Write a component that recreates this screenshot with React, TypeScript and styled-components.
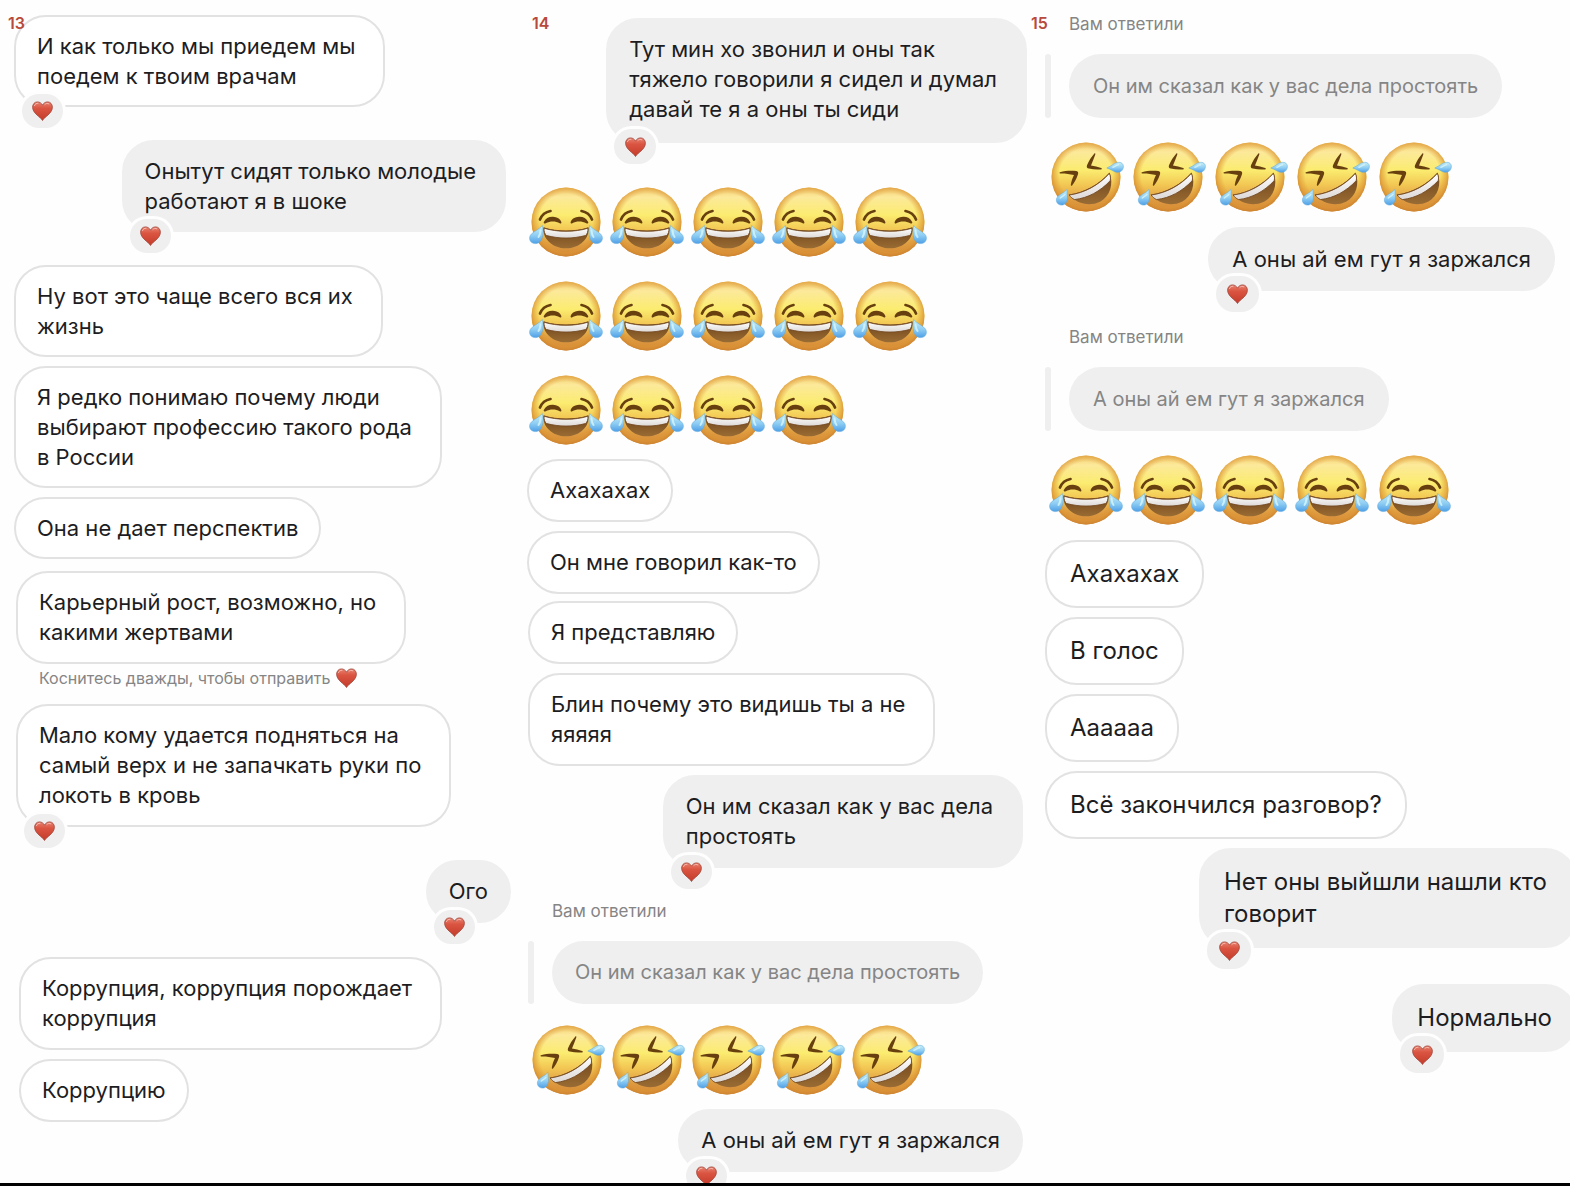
import React from "react";
import styled, { createGlobalStyle, css } from "styled-components";

/* ---------- tokens ---------- */

const GREY = "#efefef";
const LINE = "#e2e2e2";
const INK = "#1d1d1f";
const MUTED = "#858585";

type Density = "compact" | "regular" | "roomy" | "wide" | "large";

interface Metrics {
  font: number;
  line: number;
  top: number;
  bottom: number;
  side: number;
  badgeW: number;
  badgeH: number;
  lift: number;
  reply: number;
  emoji: string;
}

const SMALL: Metrics = {
  font: 22,
  line: 30,
  top: 16,
  bottom: 16,
  side: 23,
  badgeW: 41,
  badgeH: 34,
  lift: 24,
  reply: 0,
  emoji: "12px 0 5px 2px",
};

const METRICS: Record<Density, Metrics> = {
  compact: SMALL,
  regular: { ...SMALL, bottom: 17 },
  roomy: { ...SMALL, bottom: 19, badgeW: 42, badgeH: 35 },
  wide: { ...SMALL, top: 17, bottom: 17, side: 24, badgeW: 43, badgeH: 36, reply: 3, emoji: "15px 0 6px 4px" },
  large: { ...SMALL, font: 24, line: 32, top: 18, bottom: 18, side: 25, badgeW: 44, badgeH: 37, lift: 27 },
};

/* ---------- layout ---------- */

const GlobalStyle = createGlobalStyle`
  *, *::before, *::after { box-sizing: border-box; }
  body {
    margin: 0;
    background: #fefefe;
    color: ${INK};
    font-family: Inter, "Noto Sans", Roboto, sans-serif;
  }
`;

const Page = styled.main`
  display: flex;
  flex-direction: column;
  min-height: 100vh;
  border-bottom: 3px solid #000;
`;

const Board = styled.div`
  display: grid;
  grid-template-columns: 518fr 517fr 535fr;
  flex: 1;
  overflow: hidden;
`;

const Column = styled.section`
  position: relative;
  min-width: 0;
`;

const PageNumber = styled.h2<{ $left: number }>`
  position: absolute;
  z-index: 2;
  top: 13px;
  left: ${(p) => p.$left}px;
  margin: 0;
  color: #b84a3c;
  font: 600 16px/20px Inter, sans-serif;
`;

const Fragment = styled.ol<{ $density: Density; $before: number; $left: number; $right: number }>`
  display: flex;
  flex-direction: column;
  gap: 9px;
  margin: 0 ${(p) => p.$right}px 0 ${(p) => p.$left}px;
  padding: ${(p) => p.$before}px 0 0;
  list-style: none;
  ${({ $density }) => {
    const m = METRICS[$density];
    return css`
      --font: ${m.font}px;
      --line: ${m.line}px;
      --top: ${m.top}px;
      --bottom: ${m.bottom}px;
      --side: ${m.side}px;
      --badge-w: ${m.badgeW}px;
      --badge-h: ${m.badgeH}px;
      --lift: ${m.lift}px;
      --reply: ${m.reply}px;
      --emoji: ${m.emoji};
    `;
  }}
`;

const Row = styled.li<{ $own?: boolean; $reacted?: boolean }>`
  display: flex;
  flex-direction: column;
  align-items: ${(p) => (p.$own ? "flex-end" : "flex-start")};
  padding-bottom: ${(p) => (p.$reacted ? "var(--lift)" : "0")};

  &:last-child {
    padding-bottom: 0;
  }
`;

const Bubble = styled.div<{ $own?: boolean; $multi?: boolean }>`
  position: relative;
  padding: calc(var(--top) - 2px) ${(p) => (p.$multi ? "28px" : "calc(var(--side) - 2px)")}
    calc(var(--bottom) - 2px) calc(var(--side) - 2px);
  border: 2px solid ${(p) => (p.$own ? GREY : LINE)};
  border-radius: 32px;
  background: ${(p) => (p.$own ? GREY : "#fff")};
  font-size: var(--font);
  line-height: var(--line);
  white-space: pre;
`;

const Reaction = styled.span`
  position: absolute;
  bottom: -23px;
  left: 6px;
  display: flex;
  align-items: center;
  justify-content: center;
  width: var(--badge-w);
  height: var(--badge-h);
  border-radius: 18px;
  background: ${GREY};
  box-shadow: 0 0 0 3px #fefefe;
`;

const Hint = styled.p`
  display: flex;
  align-items: center;
  gap: 6px;
  margin: 0;
  padding: 4px 0 7px 23px;
  color: ${MUTED};
  font-size: 16px;
  line-height: 20px;
`;

const Reply = styled.li`
  display: flex;
  flex-direction: column;
  gap: 20px;
  padding-top: var(--reply);
`;

const ReplyLabel = styled.span`
  padding-left: 24px;
  color: ${MUTED};
  font-size: 17px;
  line-height: 20px;
`;

const QuoteLine = styled.div`
  display: flex;
  gap: 18px;
`;

const QuoteBar = styled.span`
  width: 6px;
  border-radius: 3px;
  background: ${GREY};
`;

const Quote = styled.blockquote`
  margin: 0;
  padding: var(--top) var(--side) var(--bottom);
  border-radius: 32px;
  background: ${GREY};
  color: ${MUTED};
  font-size: 20px;
  line-height: var(--line);
  white-space: nowrap;
`;

const EmojiBlock = styled.li`
  display: flex;
  flex-direction: column;
  gap: 24px;
  padding: var(--emoji);
`;

const EmojiLine = styled.div<{ $gap: number }>`
  display: flex;
  gap: ${(p) => p.$gap}px;
`;

const EmojiSvg = styled.svg`
  display: block;
  flex: none;
  width: 74px;
  height: 70px;
  overflow: visible;
`;

const Defs = styled.svg`
  position: absolute;
  width: 0;
  height: 0;
`;

/* ---------- drawings ---------- */

const SharedGradients = () => (
  <Defs aria-hidden="true">
    <defs>
      <linearGradient id="face" x1="0" y1="0" x2="0" y2="1">
        <stop offset="0" stopColor="#f3cf72" />
        <stop offset=".14" stopColor="#fce99a" />
        <stop offset=".4" stopColor="#fbec70" />
        <stop offset=".62" stopColor="#f2c653" />
        <stop offset=".85" stopColor="#dd9a42" />
        <stop offset="1" stopColor="#d08437" />
      </linearGradient>
      <radialGradient id="rim" cx=".5" cy=".48" r=".52">
        <stop offset=".74" stopColor="#dd9433" stopOpacity="0" />
        <stop offset=".9" stopColor="#dd9433" stopOpacity=".6" />
        <stop offset="1" stopColor="#cd8430" stopOpacity=".95" />
      </radialGradient>
      <linearGradient id="mouth" x1="0" y1="0" x2="0" y2="1">
        <stop offset="0" stopColor="#6d4318" />
        <stop offset="1" stopColor="#9a6c34" />
      </linearGradient>
      <linearGradient id="teeth" x1="0" y1="0" x2="0" y2="1">
        <stop offset="0" stopColor="#ffffff" />
        <stop offset="1" stopColor="#dcd8d6" />
      </linearGradient>
      <linearGradient id="tear" x1="0" y1="0" x2="0" y2="1">
        <stop offset="0" stopColor="#c9f0f6" />
        <stop offset=".55" stopColor="#8ecdf3" />
        <stop offset="1" stopColor="#4e9fe6" />
      </linearGradient>
      <linearGradient id="heart" x1="0" y1="0" x2="0" y2="1">
        <stop offset="0" stopColor="#e8806f" />
        <stop offset=".35" stopColor="#da5541" />
        <stop offset="1" stopColor="#c43a2a" />
      </linearGradient>
    </defs>
  </Defs>
);

const Heart = () => (
  <svg width="21" height="20" viewBox="0 0 21 20" role="img" aria-label="Сердце">
    <path
      d="M10.5 19.5C9 16.300.6 12.500.6 6.200.6 3.100 2.700.9 5.400.9c2.300 0 4.200 1.300 5.100 3.300C11.400 2.200 13.300.9 15.600.9c2.700 0 4.800 2.200 4.800 5.300 0 6.300-8.400 10.100-9.900 13.300z"
      fill="url(#heart)"
      stroke="#a0483c"
      strokeWidth=".8"
    />
    <path
      d="M2.500 4.600C3.100 2.900 4.500 2.100 6 2.300M12.900 3.400c1-1.100 2.600-1.300 3.900-.6"
      fill="none"
      stroke="#f7b9ae"
      strokeWidth="1"
      strokeLinecap="round"
    />
  </svg>
);

const Joy = () => (
  <EmojiSvg viewBox="0 0 74 70" role="img" aria-label="Смех до слёз">
    <circle cx="37" cy="35" r="34.500" fill="url(#face)" />
    <circle cx="37" cy="35" r="34.500" fill="url(#rim)" />
    <g fill="none" stroke="#684010" strokeLinecap="round" strokeWidth="2.700">
      <path d="M11 32.500C12.800 28 16.500 24.900 21.500 24" />
      <path d="M52.500 24C57.500 24.900 61.200 28 63 32.500" />
    </g>
    <g fill="#684010">
      <path d="M14.800 35C16.500 31.300 20 29.600 24 29.800c4 .1 7.400 2.200 8.400 5.400.2 1.200-.8 1.600-1.700 1.100-3.900-2.400-9.600-2.500-14 0-1.200.6-2.400-.1-1.900-1.300z" />
      <path d="M59.200 35C57.500 31.300 54 29.600 50 29.800c-4 .1-7.400 2.200-8.400 5.400-.2 1.200.8 1.600 1.700 1.100 3.900-2.400 9.600-2.500 14 0 1.200.6 2.400-.1 1.900-1.300z" />
    </g>
    <path d="M14.500 40.200C28 44.600 46 44.600 59.500 40.200 61 51 51 61.300 37 61.300S13 51 14.500 40.200z" fill="url(#mouth)" />
    <path
      d="M15 41.200C28 45.300 46 45.300 59 41.200c.1 3.300-.6 5.700-2.400 7.300C44 51.900 30 51.900 17.400 48.500 15.600 46.900 14.900 44.500 15 41.200z"
      fill="url(#teeth)"
      stroke="#744820"
      strokeWidth=".9"
    />
    <g fill="url(#tear)" stroke="#5aa6de" strokeWidth=".5">
      <path d="M13.400 38.500C14.800 45.500 14.500 56.200 6.600 56.600.8 56.800-1.400 50.600 2.600 46.800 5.800 43.900 10 42.300 13.400 38.500z" />
      <path d="M60.600 38.500C59.200 45.500 59.500 56.200 67.400 56.600c5.800.2 8-6 4-9.800C68.200 43.900 64 42.300 60.600 38.500z" />
    </g>
    <g fill="none" stroke="#d9f6fa" strokeWidth="2" strokeLinecap="round" opacity=".8">
      <path d="M11.500 43.500C11.300 46 10.600 48.500 9.500 50" />
      <path d="M62.500 43.500C62.700 46 63.400 48.500 64.500 50" />
    </g>
  </EmojiSvg>
);

const Rofl = () => (
  <EmojiSvg viewBox="0 0 74 70" role="img" aria-label="Катаюсь по полу от смеха">
    <circle cx="37" cy="35" r="34.500" fill="url(#face)" />
    <circle cx="37" cy="35" r="34.500" fill="url(#rim)" />
    <g fill="#684010">
      <path d="M11 30.200C16 28.700 22 28.400 27.300 29 29.300 29.300 29.500 30.800 28.900 32.600 27.600 36.500 25.800 40.300 22.900 43.700 22.200 44 21.700 43.600 21.800 42.800 22.500 39.200 23.500 36 25 33.100 20.500 31.800 16 31.300 11.200 31.400 10.300 31.300 10.200 30.500 11 30.200z" />
      <path d="M45.400 11.400C42.400 14.800 39.600 19 38 23.300 37.400 25.200 38 26.300 39.800 26.600 44 27.500 48 27.900 52.300 27.400 53 27 53 26.300 52.200 26 48.800 24.800 45.500 23.900 42 23.500 43.300 20 44.900 16.400 46.300 12.400 46.500 11.500 46 11 45.400 11.400z" />
    </g>
    <path d="M19.500 52.500C35 50.500 50 42.500 60.500 30.500 65 42 61 54.500 51 59.700 40 65 27.500 61.500 19.500 52.500z" fill="url(#mouth)" />
    <path
      d="M20.200 53C35.500 51 50 43 60.300 31.400c1.300 2.500 1.500 5 .9 7.300C51 49.500 39 56 25.500 57.600 23.200 56.500 21.500 55 20.200 53z"
      fill="url(#teeth)"
      stroke="#744820"
      strokeWidth=".9"
    />
    <g fill="url(#tear)" stroke="#5aa6de" strokeWidth=".5">
      <path d="M57.800 26C62.500 24 65.500 20.500 69.700 20.300 73.500 20.300 75 23 74.200 26 73.300 29.600 70 31 66.500 30 63.500 29 61.300 27 57.800 26z" />
      <path d="M17.900 47.500C18 52.500 19.300 56 17.500 60 15.600 63.300 12 64 9.300 62 6.700 60 6.800 56.600 9 54.200 11.500 51.700 15.400 50.600 17.900 47.500z" />
    </g>
    <g fill="none" stroke="#d9f6fa" strokeWidth="1.500" strokeLinecap="round" opacity=".8">
      <path d="M64 25.200C66 24.500 67.500 23 69.500 22.800" />
      <path d="M15.800 52.500C14.500 54 12.600 54.800 11.300 56" />
    </g>
  </EmojiSvg>
);

/* ---------- pieces ---------- */

interface MessageProps {
  lines: string[];
  own?: boolean;
  loved?: boolean;
  hint?: string;
}

const Message = ({ lines, own, loved, hint }: MessageProps) => (
  <Row $own={own} $reacted={loved}>
    <Bubble $own={own} $multi={lines.length > 1}>
      {lines.join("\n")}
      {loved && (
        <Reaction>
          <Heart />
        </Reaction>
      )}
    </Bubble>
    {hint && (
      <Hint>
        {hint}
        <Heart />
      </Hint>
    )}
  </Row>
);

const QuotedReply = ({ text }: { text: string }) => (
  <Reply>
    <ReplyLabel>Вам ответили</ReplyLabel>
    <QuoteLine>
      <QuoteBar />
      <Quote>{text}</Quote>
    </QuoteLine>
  </Reply>
);

const Emojis = ({ face: Face, rows, gap }: { face: React.ComponentType; rows: number[]; gap: number }) => (
  <EmojiBlock>
    {rows.map((count, r) => (
      <EmojiLine key={r} $gap={gap}>
        {Array.from({ length: count }, (_, i) => (
          <Face key={i} />
        ))}
      </EmojiLine>
    ))}
  </EmojiBlock>
);

export default function App() {
  return (
    <>
      <GlobalStyle />
      <SharedGradients />
      <Page>
        <Board>
          <Column>
            <PageNumber $left={8}>13</PageNumber>
            <Fragment $density="compact" $before={15} $left={14} $right={12}>
              <Message lines={["И как только мы приедем мы", "поедем к твоим врачам"]} loved />
              <Message lines={["Онытут сидят только молодые", "работают я в шоке"]} own loved />
              <Message lines={["Ну вот это чаще всего вся их", "жизнь"]} />
              <Message lines={["Я редко понимаю почему люди", "выбирают профессию такого рода", "в России"]} />
              <Message lines={["Она не дает перспектив"]} />
            </Fragment>
            <Fragment $density="regular" $before={12} $left={16} $right={7}>
              <Message
                lines={["Карьерный рост, возможно, но", "какими жертвами"]}
                hint="Коснитесь дважды, чтобы отправить"
              />
              <Message lines={["Мало кому удается подняться на", "самый верх и не запачкать руки по", "локоть в кровь"]} loved />
              <Message lines={["Ого"]} own loved />
            </Fragment>
            <Fragment $density="regular" $before={34} $left={19} $right={12}>
              <Message lines={["Коррупция, коррупция порождает", "коррупция"]} />
              <Message lines={["Коррупцию"]} />
            </Fragment>
          </Column>

          <Column>
            <PageNumber $left={14}>14</PageNumber>
            <Fragment $density="roomy" $before={18} $left={9} $right={8}>
              <Message
                lines={["Тут мин хо звонил и оны так", "тяжело говорили я сидел и думал", "давай те я а оны ты сиди"]}
                own
                loved
              />
            </Fragment>
            <Fragment $density="regular" $before={32} $left={9} $right={12}>
              <Emojis face={Joy} rows={[5, 5, 4]} gap={7} />
              <Message lines={["Ахахахах"]} />
              <Message lines={["Он мне говорил как-то"]} />
            </Fragment>
            <Fragment $density="regular" $before={7} $left={10} $right={12}>
              <Message lines={["Я представляю"]} />
              <Message lines={["Блин почему это видишь ты а не", "яяяяя"]} />
              <Message lines={["Он им сказал как у вас дела", "простоять"]} own loved />
              <QuotedReply text="Он им сказал как у вас дела простоять" />
              <Emojis face={Rofl} rows={[5]} gap={6} />
              <Message lines={["А оны ай ем гут я заржался"]} own loved />
            </Fragment>
          </Column>

          <Column>
            <PageNumber $left={-4}>15</PageNumber>
            <Fragment $density="wide" $before={11} $left={10} $right={15}>
              <QuotedReply text="Он им сказал как у вас дела простоять" />
              <Emojis face={Rofl} rows={[5]} gap={8} />
              <Message lines={["А оны ай ем гут я заржался"]} own loved />
              <QuotedReply text="А оны ай ем гут я заржался" />
              <Emojis face={Joy} rows={[5]} gap={8} />
            </Fragment>
            <Fragment $density="large" $before={9} $left={10} $right={-7}>
              <Message lines={["Ахахахах"]} />
              <Message lines={["В голос"]} />
              <Message lines={["Аааааа"]} />
              <Message lines={["Всё закончился разговор?"]} />
              <Message lines={["Нет оны выйшли нашли кто", "говорит"]} own loved />
              <Message lines={["Нормально"]} own loved />
            </Fragment>
          </Column>
        </Board>
      </Page>
    </>
  );
}
